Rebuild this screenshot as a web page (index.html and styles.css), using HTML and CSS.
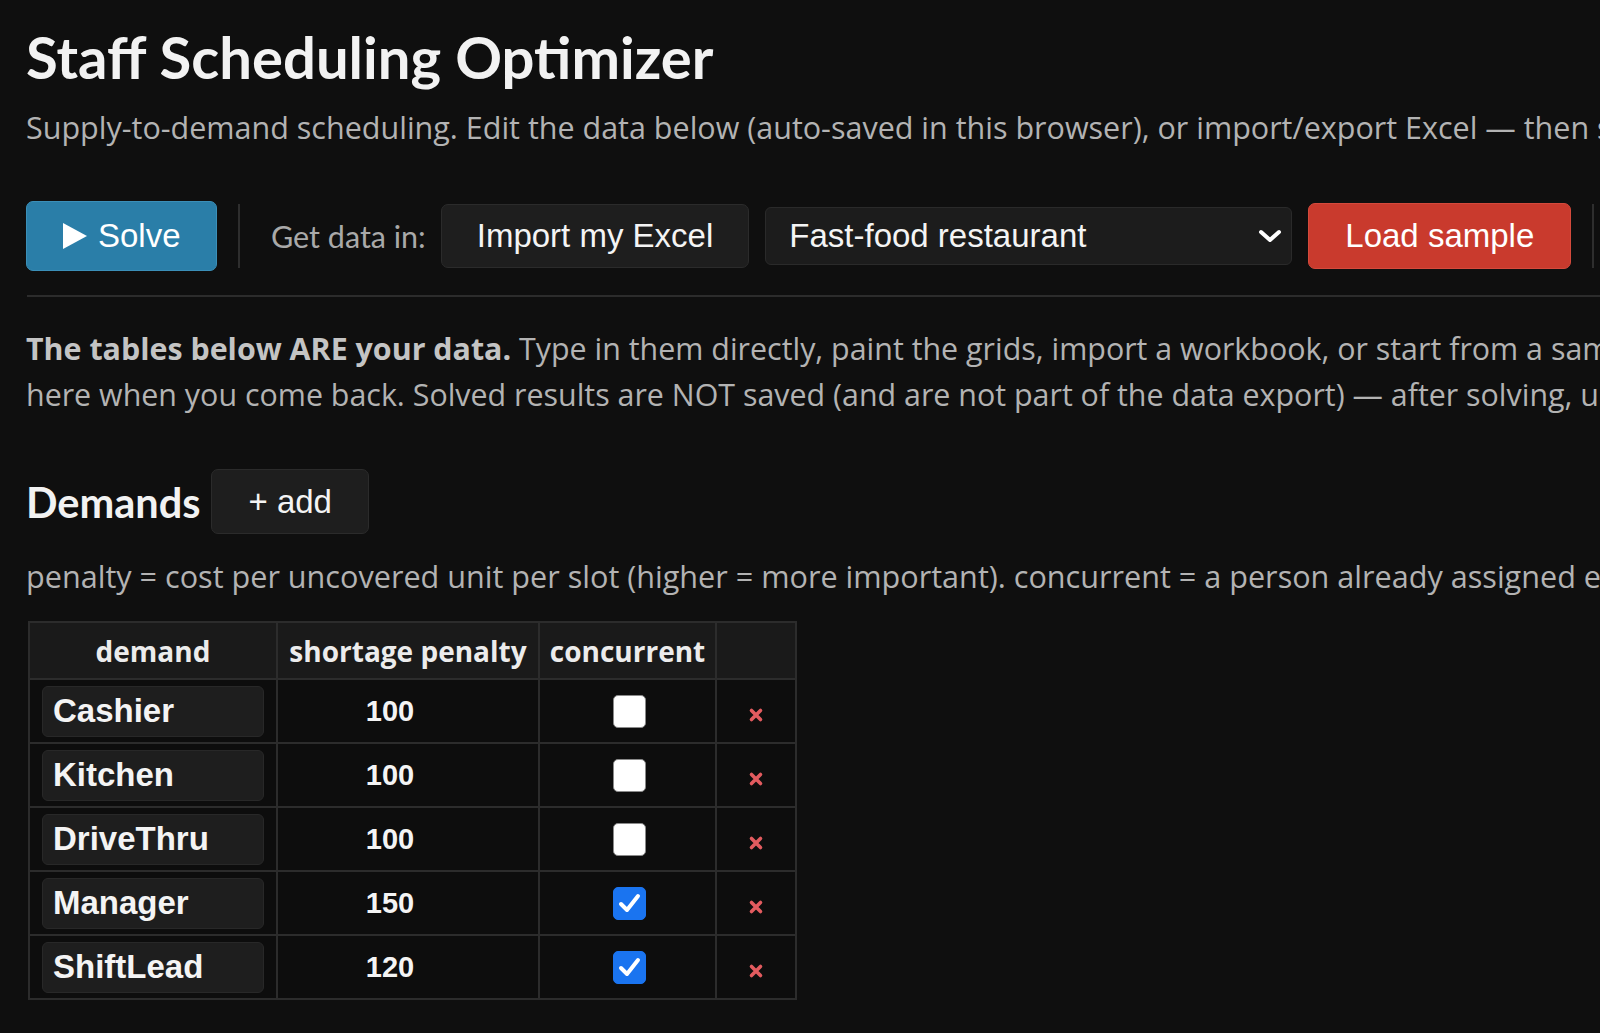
FILE: index.html
```html
<!DOCTYPE html>
<html lang="en">
<head>
<meta charset="utf-8">
<title>Staff Scheduling Optimizer</title>
<link rel="stylesheet" href="styles.css">
</head>
<body>
<div class="page">
  <h1 class="title">Staff Scheduling Optimizer</h1>
  <p class="subtitle">Supply-to-demand scheduling. Edit the data below (auto-saved in this browser), or import/export Excel — then solve.</p>

  <div class="toolbar">
    <button class="btn btn-solve"><svg class="play" viewBox="0 0 24 26" width="24" height="26"><polygon points="0,0 24,13 0,26" fill="#fff"/></svg>Solve</button>
    <span class="vsep"></span>
    <span class="tb-label">Get data in:</span>
    <button class="btn btn-dark btn-import">Import my Excel</button>
    <div class="select">
      <span class="select-text">Fast-food restaurant</span>
      <svg class="chev" viewBox="0 0 24 14" width="24" height="14"><polyline points="3,3 12,11 21,3" fill="none" stroke="#fff" stroke-width="4" stroke-linecap="round" stroke-linejoin="round"/></svg>
    </div>
    <button class="btn btn-red">Load sample</button>
    <span class="vsep"></span>
    <span class="tb-label">Get data out:</span>
    <button class="btn btn-dark">Export Excel</button>
  </div>

  <hr class="rule">

  <p class="intro"><b>The tables below ARE your data.</b> Type in them directly, paint the grids, import a workbook, or start from a sample. Everything is auto-saved, so it will still be<br>here when you come back. Solved results are NOT saved (and are not part of the data export) — after solving, use the export button to keep them.</p>

  <div class="section-head">
    <h2 class="section-title">Demands</h2>
    <button class="btn btn-dark btn-add">+ add</button>
  </div>
  <p class="hint">penalty = cost per uncovered unit per slot (higher = more important). concurrent = a person already assigned elsewhere in the same slot can also cover this.</p>

  <table class="grid">
    <thead>
      <tr>
        <th class="c-name">demand</th>
        <th class="c-pen">shortage penalty</th>
        <th class="c-conc">concurrent</th>
        <th class="c-del"></th>
      </tr>
    </thead>
    <tbody>
      <tr>
        <td><div class="name-input">Cashier</div></td>
        <td><div class="num-input">100</div></td>
        <td class="center"><span class="cb"></span></td>
        <td class="center"><svg class="del" viewBox="0 0 18 18" width="18" height="18"><path d="M4.5 4.5 L13.5 13.5 M13.5 4.5 L4.5 13.5" stroke="#e25b5f" stroke-width="3.6" stroke-linecap="round"/></svg></td>
      </tr>
      <tr>
        <td><div class="name-input">Kitchen</div></td>
        <td><div class="num-input">100</div></td>
        <td class="center"><span class="cb"></span></td>
        <td class="center"><svg class="del" viewBox="0 0 18 18" width="18" height="18"><path d="M4.5 4.5 L13.5 13.5 M13.5 4.5 L4.5 13.5" stroke="#e25b5f" stroke-width="3.6" stroke-linecap="round"/></svg></td>
      </tr>
      <tr>
        <td><div class="name-input">DriveThru</div></td>
        <td><div class="num-input">100</div></td>
        <td class="center"><span class="cb"></span></td>
        <td class="center"><svg class="del" viewBox="0 0 18 18" width="18" height="18"><path d="M4.5 4.5 L13.5 13.5 M13.5 4.5 L4.5 13.5" stroke="#e25b5f" stroke-width="3.6" stroke-linecap="round"/></svg></td>
      </tr>
      <tr>
        <td><div class="name-input">Manager</div></td>
        <td><div class="num-input">150</div></td>
        <td class="center"><span class="cb cb-on"><svg viewBox="0 0 33 33" width="33" height="33"><polyline points="8,17 14,23 25,9" fill="none" stroke="#fff" stroke-width="4" stroke-linecap="round" stroke-linejoin="round"/></svg></span></td>
        <td class="center"><svg class="del" viewBox="0 0 18 18" width="18" height="18"><path d="M4.5 4.5 L13.5 13.5 M13.5 4.5 L4.5 13.5" stroke="#e25b5f" stroke-width="3.6" stroke-linecap="round"/></svg></td>
      </tr>
      <tr>
        <td><div class="name-input">ShiftLead</div></td>
        <td><div class="num-input">120</div></td>
        <td class="center"><span class="cb cb-on"><svg viewBox="0 0 33 33" width="33" height="33"><polyline points="8,17 14,23 25,9" fill="none" stroke="#fff" stroke-width="4" stroke-linecap="round" stroke-linejoin="round"/></svg></span></td>
        <td class="center"><svg class="del" viewBox="0 0 18 18" width="18" height="18"><path d="M4.5 4.5 L13.5 13.5 M13.5 4.5 L4.5 13.5" stroke="#e25b5f" stroke-width="3.6" stroke-linecap="round"/></svg></td>
      </tr>
    </tbody>
  </table>
</div>
</body>
</html>
```

FILE: styles.css
```css
html, body {
  margin: 0;
  padding: 0;
  background: #0f0f0f;
  overflow: hidden;
}
body {
  font-family: "Open Sans", Lato, sans-serif;
  color: #b5b5b5;
}
.page {
  width: 2600px;
  padding: 22px 0 0 26px;
}
.title {
  margin: 0;
  font-family: Lato, "Open Sans", sans-serif;
  font-size: 58px;
  line-height: 70px;
  font-weight: 700;
  color: #f2f2f2;
}
.subtitle {
  margin: 16px 0 0;
  font-size: 30.5px;
  line-height: 39px;
  color: #b3b3b3;
  white-space: nowrap;
}
.toolbar {
  display: flex;
  align-items: center;
  gap: 16px;
  margin-top: 53px;
  height: 72px;
}
.btn {
  font-family: "Liberation Sans", Arial, sans-serif;
  font-size: 33px;
  color: #f4f4f4;
  border-radius: 7px;
  padding: 0 36px;
  cursor: pointer;
  white-space: nowrap;
}
.btn-solve {
  height: 70px;
  width: 191px;
  background: #2a7ea8;
  border: 1px solid #3b8fb8;
  color: #fff;
  display: flex;
  align-items: center;
  gap: 11px;
}
.play { flex: none; }
.btn-dark {
  height: 64px;
  background: #1e1e1e;
  border: 1px solid #2b2b2b;
}
.btn-import {
  padding: 0 35px;
  margin-left: -2px;
}
.btn-red {
  height: 66px;
  background: #c93a2d;
  border: 1px solid #d44a3c;
  color: #fff;
}
.vsep {
  width: 2px;
  height: 64px;
  background: #2e2e2e;
  margin: 0 5px;
}
.tb-label {
  font-family: Lato, "Open Sans", sans-serif;
  font-size: 30.5px;
  color: #a9a9a9;
  margin-left: 10px;
  margin-right: 1px;
  white-space: nowrap;
}
.select {
  height: 58px;
  width: 527px;
  box-sizing: border-box;
  background: #1c1c1c;
  border: 1px solid #2a2a2a;
  border-radius: 6px;
  display: flex;
  align-items: center;
  justify-content: space-between;
  padding: 0 9px 0 23px;
  font-family: "Liberation Sans", Arial, sans-serif;
  font-size: 33px;
  color: #f4f4f4;
}
.rule {
  border: 0;
  border-top: 2px solid #2c2c2c;
  margin: 23px 0 0 1px;
}
.intro {
  margin: 29px 0 0;
  font-size: 30.4px;
  line-height: 46px;
  color: #b3b3b3;
  white-space: nowrap;
}
.intro b {
  color: #c4c4c4;
}
.section-head {
  display: flex;
  align-items: center;
  gap: 11px;
  margin-top: 51px;
}
.section-title {
  margin: 0;
  font-family: Lato, "Open Sans", sans-serif;
  font-size: 41.5px;
  font-weight: 700;
  color: #f2f2f2;
}
.btn-add {
  height: 65px;
}
.hint {
  margin: 22px 0 0;
  font-size: 30.6px;
  line-height: 40px;
  color: #b3b3b3;
  white-space: nowrap;
}
.grid {
  margin-top: 25px;
  margin-left: 2px;
  border-collapse: collapse;
  table-layout: fixed;
  width: 763px;
  border: 2px solid #2c2c2c;
}
.grid th, .grid td {
  border: 2px solid #2c2c2c;
  padding: 0;
}
.grid th {
  height: 55px;
  background: #1a1a1a;
  font-size: 28px;
  font-weight: 700;
  color: #ececec;
  white-space: nowrap;
}
.grid td {
  height: 62px;
  background: #0d0d0d;
}
.c-name { width: 246px; }
.c-pen { width: 260px; }
.c-conc { width: 175px; }
.c-del { width: 78px; }
.center { text-align: center; }
.name-input {
  margin: 0 12px;
  height: 51px;
  box-sizing: border-box;
  background: #1e1e1e;
  border: 1px solid #282828;
  border-radius: 6px;
  padding-left: 10px;
  display: flex;
  align-items: center;
  font-family: "Liberation Sans", Arial, sans-serif;
  font-weight: 700;
  font-size: 33px;
  color: #f4f4f4;
}
.num-input {
  width: 200px;
  margin-left: 12px;
  text-align: center;
  font-family: "Liberation Sans", Arial, sans-serif;
  font-weight: 700;
  font-size: 29px;
  color: #f4f4f4;
}
.cb {
  display: inline-block;
  vertical-align: middle;
  width: 33px;
  height: 33px;
  margin-left: 4px;
  box-sizing: border-box;
  background: #fff;
  border: 1px solid #8a8a8a;
  border-radius: 5px;
}
.cb-on {
  background: #1a74f0;
  border-color: #1a74f0;
  position: relative;
}
.cb-on svg {
  position: absolute;
  left: -1px;
  top: -1px;
}
.del {
  vertical-align: middle;
  margin-top: 8px;
}
```
